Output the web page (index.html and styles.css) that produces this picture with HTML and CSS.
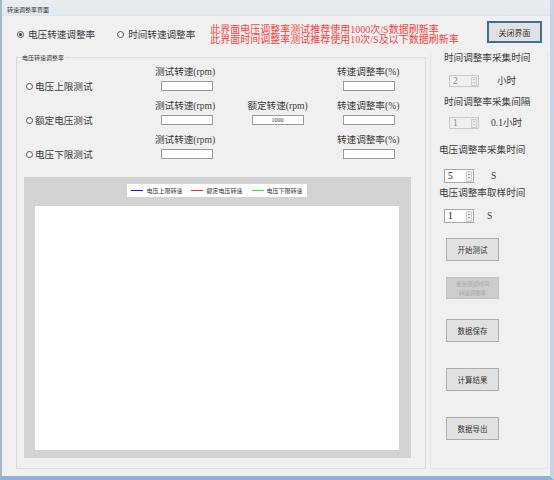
FILE: index.html
```html
<!DOCTYPE html>
<html lang="zh-CN">
<head>
<meta charset="utf-8">
<title>转速调整率界面</title>
<link rel="stylesheet" href="styles.css">
</head>
<body>
<div class="window">
  <div class="titlebar">转速调整率界面</div>
  <div class="toprow">
    <label class="radio radio-top first"><span class="dot checked"></span><span>电压转速调整率</span></label>
    <label class="radio radio-top second"><span class="dot"></span><span>时间转速调整率</span></label>
    <div class="notice">
      <div>此界面电压调整率测试推荐使用1000次/S数据刷新率</div>
      <div>此界面时间调整率测试推荐使用10次/S及以下数据刷新率</div>
    </div>
    <button class="btn btn-close">关闭界面</button>
  </div>
  <div class="mainrow">
    <div class="group">
      <div class="group-title">电压转速调整率</div>
      <div class="rows">
        <label class="radio radio-row"><span class="dot"></span><span>电压上限测试</span></label>
        <div class="field f-left"><span class="flabel">测试转速(rpm)</span><span class="input"></span></div>
        <div class="field f-mid"></div>
        <div class="field f-right"><span class="flabel">转速调整率(%)</span><span class="input"></span></div>

        <label class="radio radio-row"><span class="dot"></span><span>额定电压测试</span></label>
        <div class="field f-left"><span class="flabel">测试转速(rpm)</span><span class="input"></span></div>
        <div class="field f-mid"><span class="flabel">额定转速(rpm)</span><span class="input input-val">1000</span></div>
        <div class="field f-right"><span class="flabel">转速调整率(%)</span><span class="input"></span></div>

        <label class="radio radio-row"><span class="dot"></span><span>电压下限测试</span></label>
        <div class="field f-left"><span class="flabel">测试转速(rpm)</span><span class="input"></span></div>
        <div class="field f-mid"></div>
        <div class="field f-right"><span class="flabel">转速调整率(%)</span><span class="input"></span></div>
      </div>
      <div class="chart">
        <div class="legend">
          <span class="lg"><i class="ln blue"></i>电压上限转速</span>
          <span class="lg"><i class="ln red"></i>额定电压转速</span>
          <span class="lg"><i class="ln green"></i>电压下限转速</span>
        </div>
        <div class="plot"></div>
      </div>
    </div>
    <div class="side">
      <div class="slabel l1">时间调整率采集时间</div>
      <div class="srow r1"><div class="spin disabled"><span class="sv">2</span><span class="sb"><i class="up"></i><i class="dn"></i></span></div><span class="unit u1">小时</span></div>
      <div class="slabel l2">时间调整率采集间隔</div>
      <div class="srow r2"><div class="spin disabled"><span class="sv">1</span><span class="sb"><i class="up"></i><i class="dn"></i></span></div><span class="unit u2">0.1小时</span></div>
      <div class="slabel l3">电压调整率采集时间</div>
      <div class="srow r3"><div class="spin big"><span class="sv">5</span><span class="sb"><i class="up"></i><i class="dn"></i></span></div><span class="unit u3">S</span></div>
      <div class="slabel l4">电压调整率取样时间</div>
      <div class="srow r4"><div class="spin big"><span class="sv">1</span><span class="sb"><i class="up"></i><i class="dn"></i></span></div><span class="unit u4">S</span></div>
      <button class="btn sbtn b1">开始测试</button>
      <button class="btn sbtn b2 off"><span class="offtxt">重新测试时间</span><span class="offtxt">转速调整率</span></button>
      <button class="btn sbtn b3">数据保存</button>
      <button class="btn sbtn b4">计算结果</button>
      <button class="btn sbtn b5">数据导出</button>
    </div>
  </div>
</div>
</body>
</html>
```
FILE: styles.css
```css
* { box-sizing: border-box; }
html, body { margin: 0; padding: 0; background: #f0f0f0; }
body { font-family: "Liberation Serif", "Noto Sans CJK SC", serif; color: #3a3a3a; }

.window {
  width: 554px; height: 480px;
  background: #f0f0f0;
  border-left: 2px solid #a7b6c8;
  border-right: 4px solid #c2d5ea;
  border-bottom: 4px solid #8eb2dc;
  display: flex; flex-direction: column;
}

.titlebar {
  height: 16px;
  padding: 3px 0 0 5px;
  line-height: 13px;
  font-family: "Noto Sans CJK SC", sans-serif;
  font-size: 6px;
  color: #333;
  background: linear-gradient(#eaeef3, #e2e8ef);
  border-bottom: 1px solid #dde3ea;
}

.toprow {
  height: 37px;
  display: flex; align-items: center;
}

.radio { display: flex; align-items: center; font-size: 9.6px; line-height: 11px; color: #3a3a3a; }
.dot {
  width: 7px; height: 7px; border-radius: 50%;
  border: 1px solid #555; background: #fafafa;
  display: flex; align-items: center; justify-content: center;
  flex: none;
}
.dot.checked::after { content: ""; width: 3px; height: 3px; border-radius: 50%; background: #333; }
.radio-top { gap: 4.5px; }
.radio-top.first { margin-left: 14.5px; }
.radio-top.second { margin-left: 21.5px; }

.notice {
  margin-left: 15px;
  font-size: 10px; line-height: 10px;
  color: #f04444;
  white-space: nowrap;
}

.btn {
  font-family: "Noto Sans CJK SC", sans-serif;
  font-size: 7.5px;
  color: #333;
  background: #e1e1e1;
  border: 1px solid #adadad;
  padding: 0;
  line-height: 9px;
}
.btn-close {
  align-self: flex-start;
  margin: 5px 8px 0 auto;
  width: 55px; height: 22px;
  border: 2px solid #3f6f98;
  font-size: 8px;
}

.mainrow { flex: 1; display: flex; align-items: flex-start; }

.group {
  margin: 4px 0 0 14px;
  width: 410px; height: 412px;
  border: 1px solid #dadada;
}
.group-title {
  width: max-content;
  margin: -4px 0 0 4px;
  padding: 0 1px;
  background: #f0f0f0;
  font-family: "Noto Sans CJK SC", sans-serif;
  font-size: 6px; line-height: 8px;
  color: #333;
}

.rows {
  margin-top: 3.5px;
  display: grid;
  grid-template-columns: 138px 90px 92px 58px;
  grid-auto-rows: 25.5px;
  row-gap: 8.5px;
}
.radio-row { align-self: end; height: 10px; padding-left: 8.5px; gap: 2.5px; }
.field { display: flex; flex-direction: column; }
.f-left, .f-right { width: 58px; align-items: flex-end; }
.f-mid { width: 65px; align-items: center; }
.flabel { font-size: 9.6px; line-height: 11px; white-space: nowrap; align-self: flex-start; color: #3a3a3a; }
.f-mid .flabel { align-self: center; }
.input {
  margin-top: 4.5px;
  width: 52px; height: 10px;
  background: #fff;
  border: 1px solid #9a9a9a;
}
.input-val {
  font-size: 6px; line-height: 8px; text-align: center; color: #333;
}

.chart {
  margin: 18px 0 0 7px;
  width: 387px; height: 281px;
  background: #d3d3d3;
  padding: 7px 0 0 0;
}
.legend {
  margin-left: 103px;
  width: 180px; height: 13px;
  background: #fff;
  display: flex; align-items: center; justify-content: center; gap: 9px;
  font-family: "Noto Sans CJK SC", sans-serif;
  font-size: 6px; color: #333;
}
.lg { display: flex; align-items: center; gap: 3px; }
.ln { display: block; width: 12px; height: 1.5px; }
.ln.blue { background: #1a1ad0; }
.ln.red { background: #e83838; }
.ln.green { background: #3ee03e; }
.plot {
  margin: 9px 0 0 11px;
  width: 364px; height: 244px;
  background: #fff;
}

.side {
  margin-left: 4px;
  width: 118px; height: 416px;
  border-left: 1px solid #e4e4e4;
  border-right: 1px solid #e8e8e8;
  border-bottom: 1px solid #e4e4e4;
  display: flex; flex-direction: column; align-items: flex-start;
}
.slabel { font-size: 9.6px; line-height: 10px; white-space: nowrap; color: #3a3a3a; }
.l1 { margin: 0 0 0 13px; }
.l2 { margin: 10px 0 0 13px; }
.l3 { margin: 16px 0 0 8px; }
.l4 { margin: 5px 0 0 8px; }

.srow { display: flex; align-items: center; }
.r1 { margin: 12px 0 0 18px; }
.r2 { margin: 10px 0 0 18px; }
.r3 { margin: 14px 0 0 13px; }
.r4 { margin: 11px 0 0 13px; }
.unit { font-size: 9.6px; line-height: 10px; color: #3a3a3a; }
.u1 { margin-left: 18px; }
.u2 { margin-left: 12px; }
.u3 { margin-left: 17px; }
.u4 { margin-left: 13px; }

.spin {
  width: 30px; height: 12px;
  background: #fff;
  border: 1px solid #a8a8a8;
  display: flex; align-items: center;
  font-size: 9.6px;
  color: #111;
}
.spin.big { height: 14px; }
.spin.disabled { background: #f0f0f0; border-color: #c9c9c9; color: #8a8a8a; }
.sv { flex: 1; padding-left: 3px; line-height: 10px; }
.sb {
  width: 6px; height: 9px; margin-right: 1px;
  background: #ececec; border: 1px solid #cfcfcf;
  display: flex; flex-direction: column; align-items: center; justify-content: space-evenly;
}
.spin.big .sb { height: 11px; }
.sb i { display: block; width: 0; height: 0; border-left: 1.5px solid transparent; border-right: 1.5px solid transparent; }
.sb .up { border-bottom: 1.5px solid #555; }
.sb .dn { border-top: 1.5px solid #555; }
.spin.disabled .sb .up { border-bottom-color: #999; }
.spin.disabled .sb .dn { border-top-color: #999; }

.sbtn { width: 53px; height: 23px; margin-left: 15px; }
.b1 { margin-top: 15px; }
.b2 { margin-top: 16px; height: 22px; }
.b3 { margin-top: 20px; }
.b4 { margin-top: 26px; }
.b5 { margin-top: 26px; }
.sbtn.off {
  background: #cccccc; border-color: #c2c2c2; color: #a8a8a8;
  display: flex; flex-direction: column; align-items: center; justify-content: center; gap: 1px;
}
.offtxt { display: block; font-size: 5.5px; line-height: 8px; white-space: nowrap; }
```
